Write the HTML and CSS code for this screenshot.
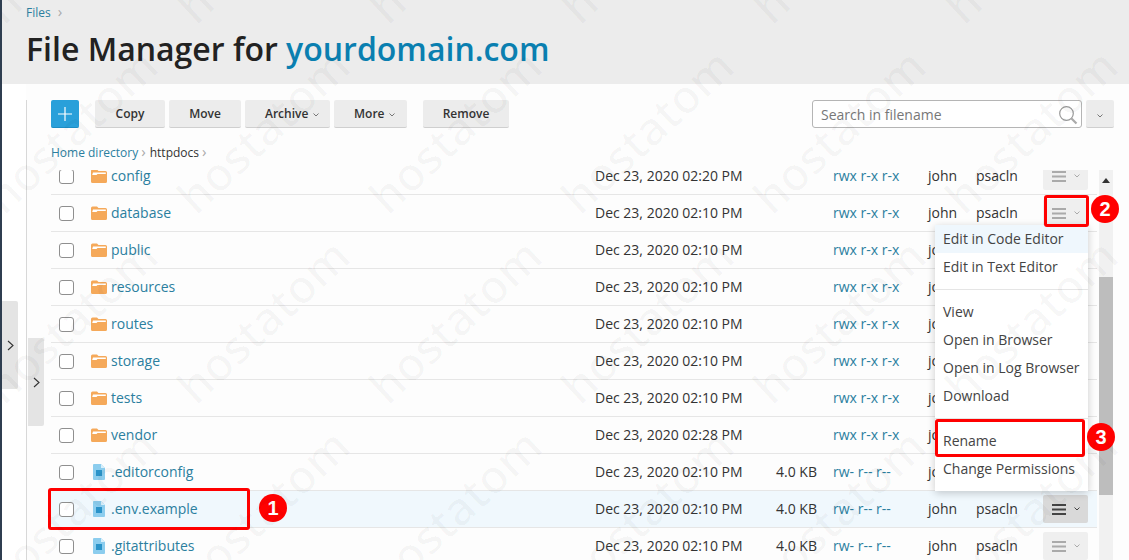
FILE: index.html
```html
<!DOCTYPE html>
<html lang="en">
<head>
<meta charset="utf-8">
<title>File Manager</title>
<link rel="stylesheet" href="styles.css">
</head>
<body>
<svg class="defs" width="0" height="0" aria-hidden="true">
  <symbol id="folder" viewBox="0 0 16 14"><path d="M0 2Q0 .5 1.500.5H6L7.500 2H14.500Q16 2 16 3.500V12.500Q16 14 14.500 14H1.500Q0 14 0 12.500Z" fill="#f5a95a"/><path d="M1.200 6L2 3.400H14.800V5H6.500L5.500 6Z" fill="#fff"/></symbol>
  <symbol id="file" viewBox="0 0 12 16"><path d="M0 1Q0 0 1 0H8L12 4V15Q12 16 11 16H1Q0 16 0 15Z" fill="#8ccdee"/><path d="M8 0L12 4H8Z" fill="#d9f0fb"/><rect x="3" y="6" width="6" height="6" fill="#2a93c9"/></symbol>
  <symbol id="bars" viewBox="0 0 14 11"><path d="M0 0h14v2H0zM0 4.500h14v2H0zM0 9h14v2H0z" fill="currentColor"/></symbol>
  <symbol id="chev" viewBox="0 0 6 4"><path d="M.5.5L3 3 5.500.5" fill="none" stroke="currentColor"/></symbol>
</svg>
<div class="page">
  <header class="head">
    <div class="crumb"><a>Files</a><span class="sep">›</span></div>
    <h1>File Manager for <a>yourdomain.com</a></h1>
  </header>
  <main class="work">
    <div class="tools">
      <button class="btn plus" aria-label="New"><svg width="16" height="16" viewBox="0 0 16 16"><path d="M8 1v14M1 8h14" stroke="#fff" stroke-width="1.2"/></svg></button>
      <button class="btn w-copy">Copy</button>
      <button class="btn w-move">Move</button>
      <button class="btn w-arch drop">Archive<svg class="ch" width="6" height="4"><use href="#chev"/></svg></button>
      <button class="btn w-more drop">More<svg class="ch" width="6" height="4"><use href="#chev"/></svg></button>
      <button class="btn w-rem">Remove</button>
      <div class="search"><span>Search in filename</span><svg width="22" height="22" viewBox="0 0 22 22"><circle cx="9.500" cy="9.500" r="6.800" fill="none" stroke="#999" stroke-width="1.200"/><path d="M14.500 14.500L19.500 19.500" stroke="#aaa" stroke-width="2.200"/></svg></div>
      <button class="btn sdrop" aria-label="Search options"><svg width="6" height="4"><use href="#chev"/></svg></button>
    </div>
    <div class="path"><a>Home directory</a><span class="sep">›</span><b>httpdocs</b><span class="sep">›</span></div>
    <div class="list">
      <div class="row"><i class="cb"></i><svg class="ic" width="16" height="14"><use href="#folder"/></svg><a class="nm">config</a><span>Dec 23, 2020 02:20 PM</span><span class="sz"></span><a>rwx r-x r-x</a><span>john</span><span>psacln</span><button class="act"><svg width="14" height="11"><use href="#bars"/></svg><svg width="6" height="4"><use href="#chev"/></svg></button></div>
      <div class="row"><i class="cb"></i><svg class="ic" width="16" height="14"><use href="#folder"/></svg><a class="nm">database</a><span>Dec 23, 2020 02:10 PM</span><span class="sz"></span><a>rwx r-x r-x</a><span>john</span><span>psacln</span><button class="act"><svg width="14" height="11"><use href="#bars"/></svg><svg width="6" height="4"><use href="#chev"/></svg></button></div>
      <div class="row"><i class="cb"></i><svg class="ic" width="16" height="14"><use href="#folder"/></svg><a class="nm">public</a><span>Dec 23, 2020 02:10 PM</span><span class="sz"></span><a>rwx r-x r-x</a><span>john</span><span>psacln</span></div>
      <div class="row"><i class="cb"></i><svg class="ic" width="16" height="14"><use href="#folder"/></svg><a class="nm">resources</a><span>Dec 23, 2020 02:10 PM</span><span class="sz"></span><a>rwx r-x r-x</a><span>john</span><span>psacln</span></div>
      <div class="row"><i class="cb"></i><svg class="ic" width="16" height="14"><use href="#folder"/></svg><a class="nm">routes</a><span>Dec 23, 2020 02:10 PM</span><span class="sz"></span><a>rwx r-x r-x</a><span>john</span><span>psacln</span></div>
      <div class="row"><i class="cb"></i><svg class="ic" width="16" height="14"><use href="#folder"/></svg><a class="nm">storage</a><span>Dec 23, 2020 02:10 PM</span><span class="sz"></span><a>rwx r-x r-x</a><span>john</span><span>psacln</span></div>
      <div class="row"><i class="cb"></i><svg class="ic" width="16" height="14"><use href="#folder"/></svg><a class="nm">tests</a><span>Dec 23, 2020 02:10 PM</span><span class="sz"></span><a>rwx r-x r-x</a><span>john</span><span>psacln</span></div>
      <div class="row"><i class="cb"></i><svg class="ic" width="16" height="14"><use href="#folder"/></svg><a class="nm">vendor</a><span>Dec 23, 2020 02:28 PM</span><span class="sz"></span><a>rwx r-x r-x</a><span>john</span><span>psacln</span></div>
      <div class="row"><i class="cb"></i><svg class="ic file" width="12" height="16"><use href="#file"/></svg><a class="nm">.editorconfig</a><span>Dec 23, 2020 02:10 PM</span><span class="sz">4.0 KB</span><a>rw- r-- r--</a><span>john</span><span>psacln</span></div>
      <div class="row on"><i class="cb"></i><svg class="ic file" width="12" height="16"><use href="#file"/></svg><a class="nm">.env.example</a><span>Dec 23, 2020 02:10 PM</span><span class="sz">4.0 KB</span><a>rw- r-- r--</a><span>john</span><span>psacln</span><button class="act dark"><svg width="14" height="11"><use href="#bars"/></svg><svg width="6" height="4"><use href="#chev"/></svg></button></div>
      <div class="row"><i class="cb"></i><svg class="ic file" width="12" height="16"><use href="#file"/></svg><a class="nm">.gitattributes</a><span>Dec 23, 2020 02:10 PM</span><span class="sz">4.0 KB</span><a>rw- r-- r--</a><span>john</span><span>psacln</span><button class="act"><svg width="14" height="11"><use href="#bars"/></svg><svg width="6" height="4"><use href="#chev"/></svg></button></div>
    </div>
    <div class="scroll"><i class="up"></i><i class="thumb"></i></div>
  </main>
</div>
<div class="handle h1"><svg width="7" height="11" viewBox="0 0 7 11"><path d="M1 1l5 4.500-5 4.500" fill="none" stroke="#333" stroke-width="1.100"/></svg></div>
<div class="handle h2"><svg width="7" height="11" viewBox="0 0 7 11"><path d="M1 1l5 4.500-5 4.500" fill="none" stroke="#333" stroke-width="1.100"/></svg></div>
<ul class="menu">
  <li class="hi">Edit in Code Editor</li>
  <li>Edit in Text Editor</li>
  <li class="rule"></li>
  <li>View</li>
  <li>Open in Browser</li>
  <li>Open in Log Browser</li>
  <li>Download</li>
  <li class="rule"></li>
  <li>Rename</li>
  <li>Change Permissions</li>
</ul>
<div class="mark r1"></div><div class="num n1">1</div>
<div class="mark r2"></div><div class="num n2">2</div>
<div class="mark r3"></div><div class="num n3">3</div>
<div class="wm" aria-hidden="true"><div class="wm-grid">
  <span>hostatom</span><span>hostatom</span><span>hostatom</span><span>hostatom</span><span>hostatom</span><span>hostatom</span>
  <span>hostatom</span><span>hostatom</span><span>hostatom</span><span>hostatom</span><span>hostatom</span><span>hostatom</span>
  <span>hostatom</span><span>hostatom</span><span>hostatom</span><span>hostatom</span><span>hostatom</span><span>hostatom</span>
  <span>hostatom</span><span>hostatom</span><span>hostatom</span><span>hostatom</span><span>hostatom</span><span>hostatom</span>
</div></div>
</body>
</html>
```
FILE: styles.css
```css
* { box-sizing: border-box; }
html, body { margin: 0; height: 560px; overflow: hidden; }
body { position: relative; background: #fff; color: #333; font: 14px/20px "Open Sans", sans-serif; border-left: 2px solid #2f3e50; }
.defs { position: absolute; }
a { color: #2b7f9f; }
.head { height: 84px; background: #ececec; padding: 2px 0 0 24px; }
.crumb { font-size: 12px; line-height: 18px; }
.crumb .sep { margin-left: 7px; font-size: 15px; }
.sep { color: #aaa; margin-left: 5px; }
h1 { margin: 6px 0 0; font-size: 32px; line-height: 42px; font-weight: 600; color: #222; }
h1 a { color: #0a7fb0; }
.work { position: relative; height: 476px; margin-left: 24px; padding: 16px 0 0 25px; background: #fdfdfd; }
.work::before { content: ""; position: absolute; left: 0; top: 16px; bottom: 0; width: 1px; background: #d8d8d8; }
.tools { display: flex; height: 28px; width: 1063px; }
.btn { height: 28px; border: 0; border-bottom: 1px solid #cfcfcf; background: #ececec; border-radius: 2px; color: #333; font: 600 12px/26px "Open Sans", sans-serif; padding: 0; margin-right: 4px; }
.drop { text-align: left; padding-left: 20px; }
.ch { color: #777; margin-left: 5px; vertical-align: 1px; }
.plus { width: 28px; margin-right: 16px; background: #29a0da; border-color: #1d8dc4; display: flex; align-items: center; justify-content: center; }
.w-copy { width: 70px; }
.w-move { width: 72px; }
.w-arch { width: 85px; }
.w-more { width: 73px; margin-right: 16px; }
.w-rem { width: 86px; margin-right: 0; }
.search { margin-left: 303px; width: 270px; height: 28px; border: 1px solid #b5b5b5; border-radius: 3px; background: #fff; display: flex; align-items: center; justify-content: space-between; padding: 2px 2px 0 8px; color: #777; font-size: 14px; }
.sdrop { width: 28px; margin: 0 0 0 4px; color: #777; }
.path { height: 24px; margin-top: 11px; font-size: 12px; line-height: 24px; }
.path b { font-weight: 400; color: #333; margin-left: 4px; }
.path .sep { margin-left: 3px; font-size: 15px; }
.list { position: absolute; top: 86px; left: 25px; right: 32px; bottom: 0; overflow: hidden; }
.row { height: 37px; border-bottom: 1px solid #e6e6e6; display: grid; grid-template-columns: 32px 28px 484px 150px 88px 95px 48px 67px 45px; align-items: center; position: relative; }
.row:first-child { margin-top: -12px; }
.row.on { background: #f0f8fd; }
.cb { width: 15px; height: 15px; margin-left: 8px; border: 1px solid #8f8f8f; border-radius: 3px; background: #fff; }
.ic { margin-left: 8px; }
.ic.file { margin-left: 10px; }
.sz { text-align: right; margin-left: -36px; width: 108px; }
.act { grid-column: 9; width: 45px; height: 28px; padding: 0; border: 0; border-radius: 2px; background: #efefef; color: #aaa; display: flex; align-items: center; justify-content: center; gap: 8px; }
.act.dark { background: #d9d9d9; color: #444; }
.scroll { position: absolute; top: 86px; right: 16px; width: 14px; bottom: 0; background: #f1f1f1; }
.up { position: absolute; top: 8px; left: 3px; border: 4px solid transparent; border-top: 0; border-bottom: 5px solid #333; }
.thumb { position: absolute; top: 107px; left: 0; width: 14px; height: 218px; background: #bdbdbd; }
.handle { position: absolute; background: #e4e4e4; width: 16px; display: flex; align-items: center; justify-content: center; border-radius: 0 2px 2px 0; }
.h1 { left: 0; top: 301px; height: 88px; }
.h2 { left: 26px; top: 338px; height: 88px; }
.menu { position: absolute; left: 933px; top: 225px; width: 153px; height: 266px; margin: 0; padding: 0 0 8px; list-style: none; background: #fff; box-shadow: 0 2px 8px rgba(0,0,0,.2); color: #444; }
.menu li { height: 28px; line-height: 28px; padding-left: 8px; white-space: nowrap; }
.menu .hi { background: #eff7fd; }
.menu .rule { height: 17px; position: relative; }
.menu .rule::after { content: ""; position: absolute; left: 0; right: 0; top: 8px; height: 1px; background: #e5e5e5; }
.mark { position: absolute; border: 3px solid #f00; border-radius: 3px; }
.r1 { left: 46px; top: 488px; width: 202px; height: 42px; }
.r2 { left: 1042px; top: 195px; width: 45px; height: 32px; }
.r3 { left: 933px; top: 419px; width: 150px; height: 38px; }
.num { position: absolute; width: 28px; height: 28px; border-radius: 50%; background: #f00; color: #fff; font: 700 20px/28px "Liberation Sans", sans-serif; text-align: center; }
.n1 { left: 257px; top: 494px; }
.n2 { left: 1089px; top: 195px; }
.n3 { left: 1085px; top: 423px; }
.wm { position: absolute; left: -2px; top: 0; width: 1129px; height: 560px; overflow: hidden; pointer-events: none; }
.wm-grid { margin: -155px 0 0 -26px; width: 1152px; display: grid; grid-template-columns: repeat(6, 192px); grid-auto-rows: 190px; }
.wm span { transform: rotate(-43deg); font: 600 46px/50px "Open Sans", sans-serif; color: rgba(0,0,0,.028); height: 50px; align-self: center; justify-self: center; white-space: nowrap; }
```
